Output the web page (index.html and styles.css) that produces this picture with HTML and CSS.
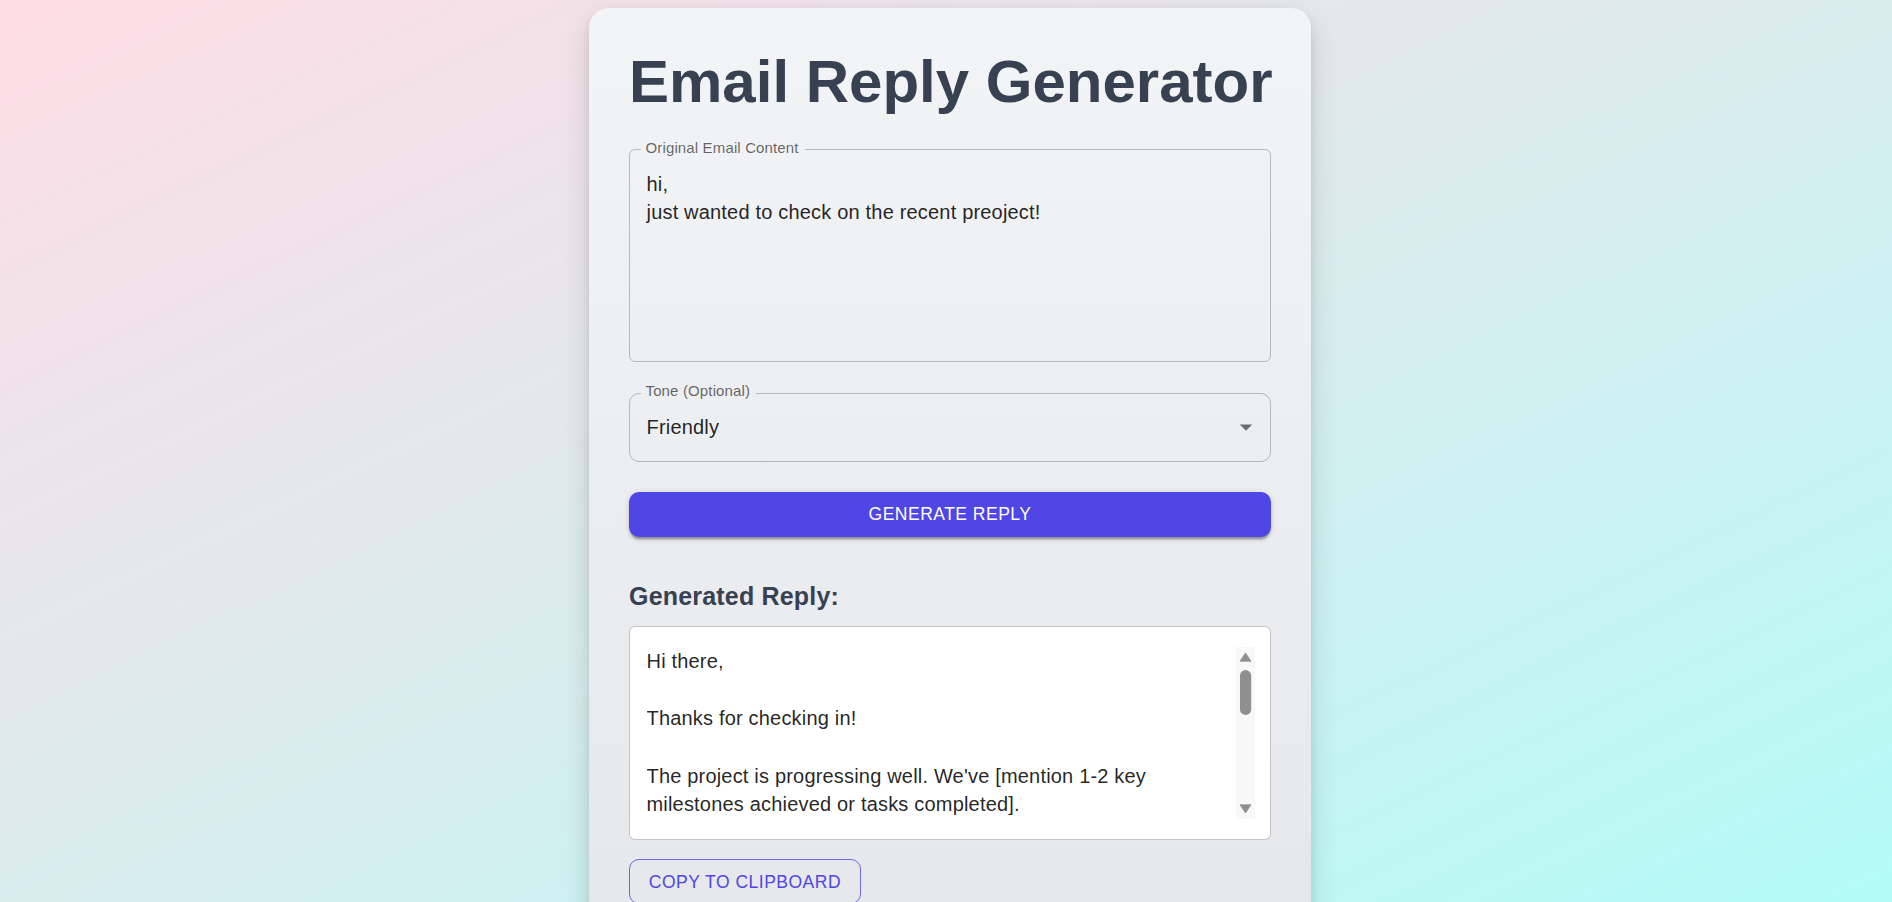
FILE: index.html
```html
<!DOCTYPE html>
<html lang="en">
<head>
<meta charset="utf-8">
<title>Email Reply Generator</title>
<link rel="stylesheet" href="styles.css">
</head>
<body>
<div class="page">
  <main class="card">
    <h1 class="title">Email Reply Generator</h1>

    <fieldset class="field field-multiline">
      <legend class="field-label">Original Email Content</legend>
      <div class="field-text">hi,
just wanted to check on the recent preoject!</div>
    </fieldset>

    <fieldset class="field field-select">
      <legend class="field-label">Tone (Optional)</legend>
      <div class="select-row">
        <span class="select-value">Friendly</span>
        <svg class="select-icon" viewBox="0 0 24 24" width="30" height="30" aria-hidden="true"><path d="M7 10l5 5 5-5z"/></svg>
      </div>
    </fieldset>

    <button class="btn-primary" type="button">Generate Reply</button>

    <h2 class="section-title">Generated Reply:</h2>

    <div class="reply-box">
      <div class="reply-text">Hi there,

Thanks for checking in!

The project is progressing well. We've [mention 1-2 key milestones achieved or tasks completed].</div>
      <svg class="scrollbar" viewBox="0 0 19 172.5" width="19" height="172.5" aria-hidden="true">
        <rect x="0" y="0" width="19" height="172.5" fill="#f8f8f8"/>
        <polygon points="9.5,6 15,14.2 4,14.2" fill="#8f8f8f" stroke="#8f8f8f" stroke-width="0.8" stroke-linejoin="round"/>
        <rect x="4" y="23" width="11.2" height="45" rx="5.6" fill="#8f8f8f"/>
        <polygon points="4,157.8 15,157.8 9.5,166" fill="#8f8f8f" stroke="#8f8f8f" stroke-width="0.8" stroke-linejoin="round"/>
      </svg>
    </div>

    <button class="btn-outline" type="button">Copy to Clipboard</button>
  </main>
</div>
</body>
</html>
```
FILE: styles.css
```css
html, body {
  height: 100%;
}

body {
  margin: 0;
  overflow: hidden;
  font-family: "Liberation Sans", Arial, Helvetica, sans-serif;
  background: linear-gradient(to bottom right, #ffdce5 0%, #b3fbf6 100%);
}

.page {
  display: flex;
  justify-content: center;
  align-items: flex-start;
  padding: 8px 0 0 8px;
}

.card {
  box-sizing: border-box;
  width: 722px;
  padding: 38px 40px 40px;
  border-radius: 20px;
  background: linear-gradient(to bottom, #f3f4f6 0%, #e5e7eb 100%);
  box-shadow: 0 12px 28px rgba(0, 0, 0, 0.13), 0 4px 10px rgba(0, 0, 0, 0.08);
  display: flex;
  flex-direction: column;
}

.title {
  margin: 0;
  font-size: 60px;
  line-height: 72px;
  font-weight: 700;
  color: #374151;
  text-align: center;
  white-space: nowrap;
}

.field {
  margin: 20.5px 0 0;
  min-width: 0;
  border: 1px solid rgba(0, 0, 0, 0.23);
  border-radius: 6px;
  padding: 9px 16.5px 19.25px 16.5px;
}

.field-label {
  margin-left: -6px;
  padding: 0 6px 5px 5px;
  font-size: 15px;
  line-height: 17px;
  letter-spacing: 0.14px;
  color: rgba(0, 0, 0, 0.6);
}

.field-text {
  height: 172.5px;
  font-size: 20px;
  line-height: 28.75px;
  letter-spacing: 0.1876px;
  color: rgba(0, 0, 0, 0.87);
  white-space: pre-wrap;
}

.field-select {
  margin-top: 19.75px;
  border-radius: 10px;
  padding-right: 8.75px;
}

.select-row {
  display: flex;
  align-items: center;
  height: 28.75px;
}

.select-value {
  flex: 1;
  font-size: 20px;
  line-height: 28.75px;
  letter-spacing: 0.1876px;
  color: rgba(0, 0, 0, 0.87);
}

.select-icon {
  display: block;
  flex-shrink: 0;
  fill: rgba(0, 0, 0, 0.54);
}

.btn-primary {
  margin-top: 30px;
  height: 45px;
  border: 0;
  border-radius: 10px;
  background: #4f46e5;
  color: #fff;
  font-family: inherit;
  font-size: 17.5px;
  letter-spacing: 0.5px;
  text-transform: uppercase;
  box-shadow: 0 3.75px 1.25px -2.5px rgba(0, 0, 0, 0.2), 0 2.5px 2.5px 0 rgba(0, 0, 0, 0.14), 0 1.25px 6.25px 0 rgba(0, 0, 0, 0.12);
  cursor: pointer;
}

.section-title {
  margin: 39px 0 10px;
  font-size: 25px;
  line-height: 40px;
  font-weight: 700;
  letter-spacing: 0.19px;
  color: #374151;
}

.reply-box {
  box-sizing: border-box;
  height: 213.75px;
  display: flex;
  padding: 19.625px 15.5px 19.625px 16.5px;
  border: 1px solid rgba(0, 0, 0, 0.23);
  border-radius: 6px;
  background: #fff;
}

.reply-text {
  flex: 1;
  min-width: 0;
  height: 172.5px;
  overflow: hidden;
  font-size: 20px;
  line-height: 28.75px;
  letter-spacing: 0.1876px;
  color: rgba(0, 0, 0, 0.87);
  white-space: pre-wrap;
}

.scrollbar {
  display: block;
  flex-shrink: 0;
}

.btn-outline {
  align-self: flex-start;
  margin-top: 19.5px;
  padding: 6.25px 18.75px;
  border: 1px solid rgba(79, 70, 229, 0.8);
  border-radius: 10px;
  background: transparent;
  color: #4f46e5;
  font-family: inherit;
  font-size: 17.5px;
  line-height: 30.625px;
  letter-spacing: 0.5px;
  text-transform: uppercase;
  cursor: pointer;
}
```
